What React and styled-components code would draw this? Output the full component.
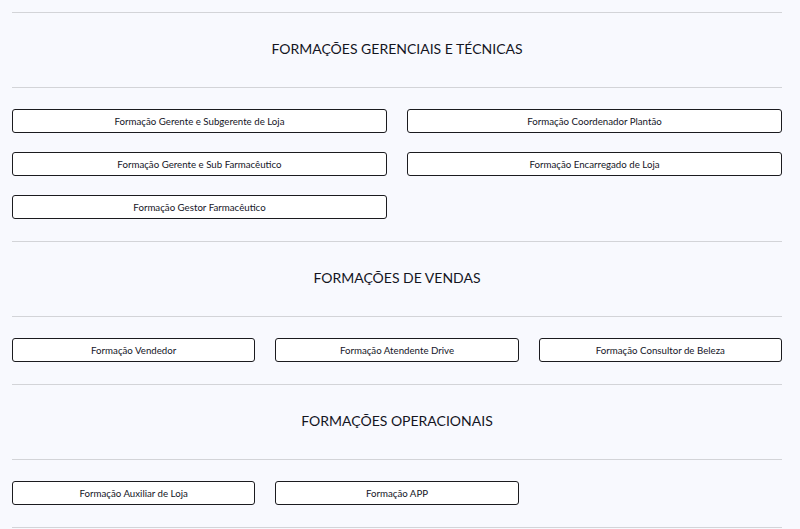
import styled, {createGlobalStyle} from "styled-components";

const sections = [
  {
    title: "FORMAÇÕES GERENCIAIS E TÉCNICAS",
    cols: 2,
    items: [
      "Formação Gerente e Subgerente de Loja",
      "Formação Coordenador Plantão",
      "Formação Gerente e Sub Farmacêutico",
      "Formação Encarregado de Loja",
      "Formação Gestor Farmacêutico",
    ],
  },
  {
    title: "FORMAÇÕES DE VENDAS",
    cols: 3,
    items: [
      "Formação Vendedor",
      "Formação Atendente Drive",
      "Formação Consultor de Beleza",
    ],
  },
  {
    title: "FORMAÇÕES OPERACIONAIS",
    cols: 3,
    items: ["Formação Auxiliar de Loja", "Formação APP"],
  },
];

export default function App() {
  return (
    <>
      <GlobalStyle />
      <StyledPage>
        <StyledDivider />
        {sections.map(section => (
          <section key={section.title}>
            <StyledTitle>{section.title}</StyledTitle>
            <StyledDivider />
            <StyledGrid cols={section.cols}>
              {section.items.map(item => (
                <StyledButton key={item}>{item}</StyledButton>
              ))}
            </StyledGrid>
            <StyledDivider />
          </section>
        ))}
      </StyledPage>
    </>
  );
}

const GlobalStyle = createGlobalStyle`
  body {
    margin: 0;
    background-color: #f8f9fe;
    font-family: "Lato", "Noto Sans", sans-serif;
  }
`;

const StyledPage = styled.main`
  padding: 12px 18px 0 12px;
`;

const StyledDivider = styled.hr`
  margin: 0;
  border: none;
  border-top: 1px solid #d3d4d8;
`;

const StyledTitle = styled.h2`
  display: flex;
  align-items: center;
  justify-content: center;
  box-sizing: border-box;
  height: 74px;
  margin: 0;
  padding-bottom: 4px;
  font-family: "Lato", sans-serif;
  font-size: 14px;
  font-weight: 400;
  color: #14151f;
`;

const StyledGrid = styled.div`
  display: grid;
  grid-template-columns: repeat(${props => props.cols}, 1fr);
  column-gap: 20px;
  row-gap: 19px;
  padding: 21px 0 22px;
`;

const StyledButton = styled.button`
  height: 24px;
  padding: 0 8px;
  border: 1px solid #1b1b1f;
  border-radius: 3px;
  background-color: #ffffff;
  font-family: "Lato", sans-serif;
  font-size: 9.7px;
  color: #14151f;
  cursor: pointer;
`;
